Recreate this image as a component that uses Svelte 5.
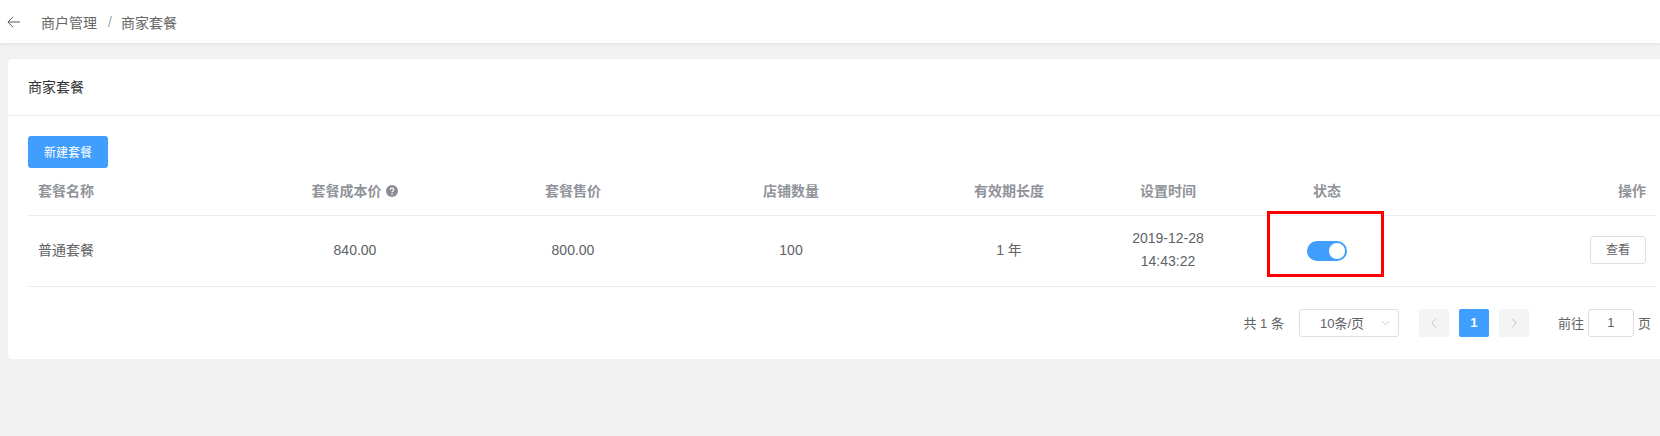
<script>
    const columns = [
        { key: 'name', label: '套餐名称', width: 188, align: 'left' },
        { key: 'cost', label: '套餐成本价', width: 278, align: 'center', help: true },
        { key: 'price', label: '套餐售价', width: 158, align: 'center' },
        { key: 'shops', label: '店铺数量', width: 278, align: 'center' },
        { key: 'period', label: '有效期长度', width: 158, align: 'center' },
        { key: 'time', label: '设置时间', width: 160, align: 'center' },
        { key: 'status', label: '状态', width: 158, align: 'center' },
        { key: 'action', label: '操作', width: 250, align: 'right' }
    ];

    const row = {
        name: '普通套餐',
        cost: '840.00',
        price: '800.00',
        shops: '100',
        period: '1 年',
        date: '2019-12-28',
        clock: '14:43:22'
    };
</script>

<div class="page">
    <nav class="topbar">
        <svg class="back" viewBox="0 0 14 12" width="14" height="12" aria-hidden="true">
            <path d="M13 6H1M6 .8 .9 6l5.1 5.2" fill="none" stroke="#55595f" stroke-width="1" />
        </svg>
        <span class="crumb">商户管理</span>
        <span class="sep">/</span>
        <span class="crumb">商家套餐</span>
    </nav>

    <section class="card">
        <header class="card-head">商家套餐</header>
        <div class="card-body">
            <button class="primary">新建套餐</button>

            <table>
                <colgroup>
                    {#each columns as col}
                        <col style="width: {col.width}px" />
                    {/each}
                </colgroup>
                <thead>
                    <tr>
                        {#each columns as col}
                            <th class={col.align}>
                                {col.label}
                                {#if col.help}
                                    <svg class="help" viewBox="0 0 12 12" width="12" height="12" aria-hidden="true">
                                        <circle cx="6" cy="6" r="6" fill="#8c8c94" />
                                        <path d="M4.2 4.7c0-1 .8-1.6 1.8-1.6s1.8.6 1.8 1.5c0 1.3-1.8 1.3-1.8 2.6" fill="none" stroke="#fff" stroke-width="1.2" />
                                        <circle cx="6" cy="9" r=".8" fill="#fff" />
                                    </svg>
                                {/if}
                            </th>
                        {/each}
                    </tr>
                </thead>
                <tbody>
                    <tr>
                        <td class="left">{row.name}</td>
                        <td class="center">{row.cost}</td>
                        <td class="center">{row.price}</td>
                        <td class="center">{row.shops}</td>
                        <td class="center">{row.period}</td>
                        <td class="center time">{row.date}<br />{row.clock}</td>
                        <td class="center status">
                            <span class="switch"><span class="knob"></span></span>
                            <span class="mark"></span>
                        </td>
                        <td class="right"><button class="plain">查看</button></td>
                    </tr>
                </tbody>
            </table>

            <div class="pager">
                <span class="total">共 1 条</span>
                <div class="select">
                    <span>10条/页</span>
                    <svg viewBox="0 0 10 6" width="9" height="6" aria-hidden="true">
                        <path d="M1 1l4 4 4-4" fill="none" stroke="#c0c4cc" stroke-width="1" />
                    </svg>
                </div>
                <div class="pages">
                    <span class="page-btn">
                        <svg viewBox="0 0 6 10" width="6" height="10" aria-hidden="true"><path d="M5 .5.8 5 5 9.5" fill="none" stroke="#c0c4cc" /></svg>
                    </span>
                    <span class="page-btn active">1</span>
                    <span class="page-btn">
                        <svg viewBox="0 0 6 10" width="6" height="10" aria-hidden="true"><path d="M1 .5 5.2 5 1 9.5" fill="none" stroke="#c0c4cc" /></svg>
                    </span>
                </div>
                <div class="jump">
                    <span>前往</span>
                    <span class="jump-input">1</span>
                    <span>页</span>
                </div>
            </div>
        </div>
    </section>
</div>

<style>
    :global(body) {
        background: #f1f1f1;
    }

    .page {
        height: 436px;
        background: #f1f1f1;
        font-family: "Liberation Sans", "Noto Sans CJK SC", sans-serif;
        color: #606266;
        overflow: hidden;
    }

    .topbar {
        height: 43px;
        display: flex;
        align-items: center;
        background: #fff;
        padding-left: 7px;
        box-shadow: 0 1px 3px rgba(0, 0, 0, 0.08);
        font-size: 14px;
        color: #666;
    }

    .back {
        margin-right: 20px;
    }

    .sep {
        margin: 0 9px 0 11px;
        color: #a0a4ab;
    }

    .card {
        margin: 16px 0 0 8px;
        height: 300px;
        background: #fff;
        border-radius: 4px 0 0 4px;
    }

    .card-head {
        height: 56px;
        line-height: 57px;
        padding-left: 20px;
        font-size: 14px;
        color: #303133;
        border-bottom: 1px solid #ebeef5;
    }

    .card-body {
        padding: 20px 4px 0 20px;
    }

    .primary {
        display: block;
        width: 80px;
        height: 32px;
        padding: 0 0 2px;
        border: 0;
        border-radius: 3px;
        background: #409eff;
        color: #fff;
        font: inherit;
        font-size: 12px;
    }

    table {
        width: 1628px;
        table-layout: fixed;
        border-collapse: collapse;
        font-size: 14px;
    }

    th {
        height: 47px;
        padding: 0 10px 2px;
        box-sizing: border-box;
        font-weight: 700;
        color: #909399;
        border-bottom: 1px solid #ebeef5;
    }

    td {
        height: 71px;
        padding: 0 10px 1px;
        box-sizing: border-box;
        border-bottom: 1px solid #ebeef5;
        line-height: 23px;
    }

    .left {
        text-align: left;
    }

    .center {
        text-align: center;
    }

    .right {
        text-align: right;
    }

    .help {
        vertical-align: -1px;
        margin-left: 1px;
    }

    .status {
        position: relative;
    }

    .switch {
        display: inline-block;
        width: 40px;
        height: 20px;
        border-radius: 10px;
        background: #409eff;
        vertical-align: middle;
        position: relative;
    }

    .knob {
        position: absolute;
        top: 2px;
        right: 2px;
        width: 16px;
        height: 16px;
        border-radius: 50%;
        background: #fff;
    }

    /* 红框标注 */
    .mark {
        position: absolute;
        left: 19px;
        top: -5px;
        width: 117px;
        height: 66px;
        box-sizing: border-box;
        border: 3px solid #f00;
    }

    .plain {
        width: 56px;
        height: 28px;
        padding: 0;
        border: 1px solid #dcdfe6;
        border-radius: 3px;
        background: #fff;
        color: #606266;
        font: inherit;
        font-size: 12px;
        vertical-align: middle;
    }

    .pager {
        display: flex;
        align-items: center;
        height: 28px;
        margin-top: 22px;
        padding-right: 5px;
        justify-content: flex-end;
        font-size: 13px;
    }

    .select {
        width: 100px;
        height: 28px;
        box-sizing: border-box;
        margin-left: 15px;
        padding: 0 8px 0 20px;
        display: flex;
        align-items: center;
        justify-content: space-between;
        border: 1px solid #dcdfe6;
        border-radius: 3px;
    }

    .pages {
        display: flex;
        gap: 10px;
        margin-left: 20px;
    }

    .page-btn {
        width: 30px;
        height: 28px;
        display: flex;
        align-items: center;
        justify-content: center;
        background: #f4f4f5;
        border-radius: 2px;
        font-weight: 700;
    }

    .page-btn.active {
        background: #409eff;
        color: #fff;
    }

    .jump {
        display: flex;
        align-items: center;
        gap: 4px;
        margin-left: 29px;
    }

    .jump-input {
        width: 46px;
        height: 28px;
        box-sizing: border-box;
        line-height: 26px;
        text-align: center;
        border: 1px solid #dcdfe6;
        border-radius: 3px;
    }
</style>
